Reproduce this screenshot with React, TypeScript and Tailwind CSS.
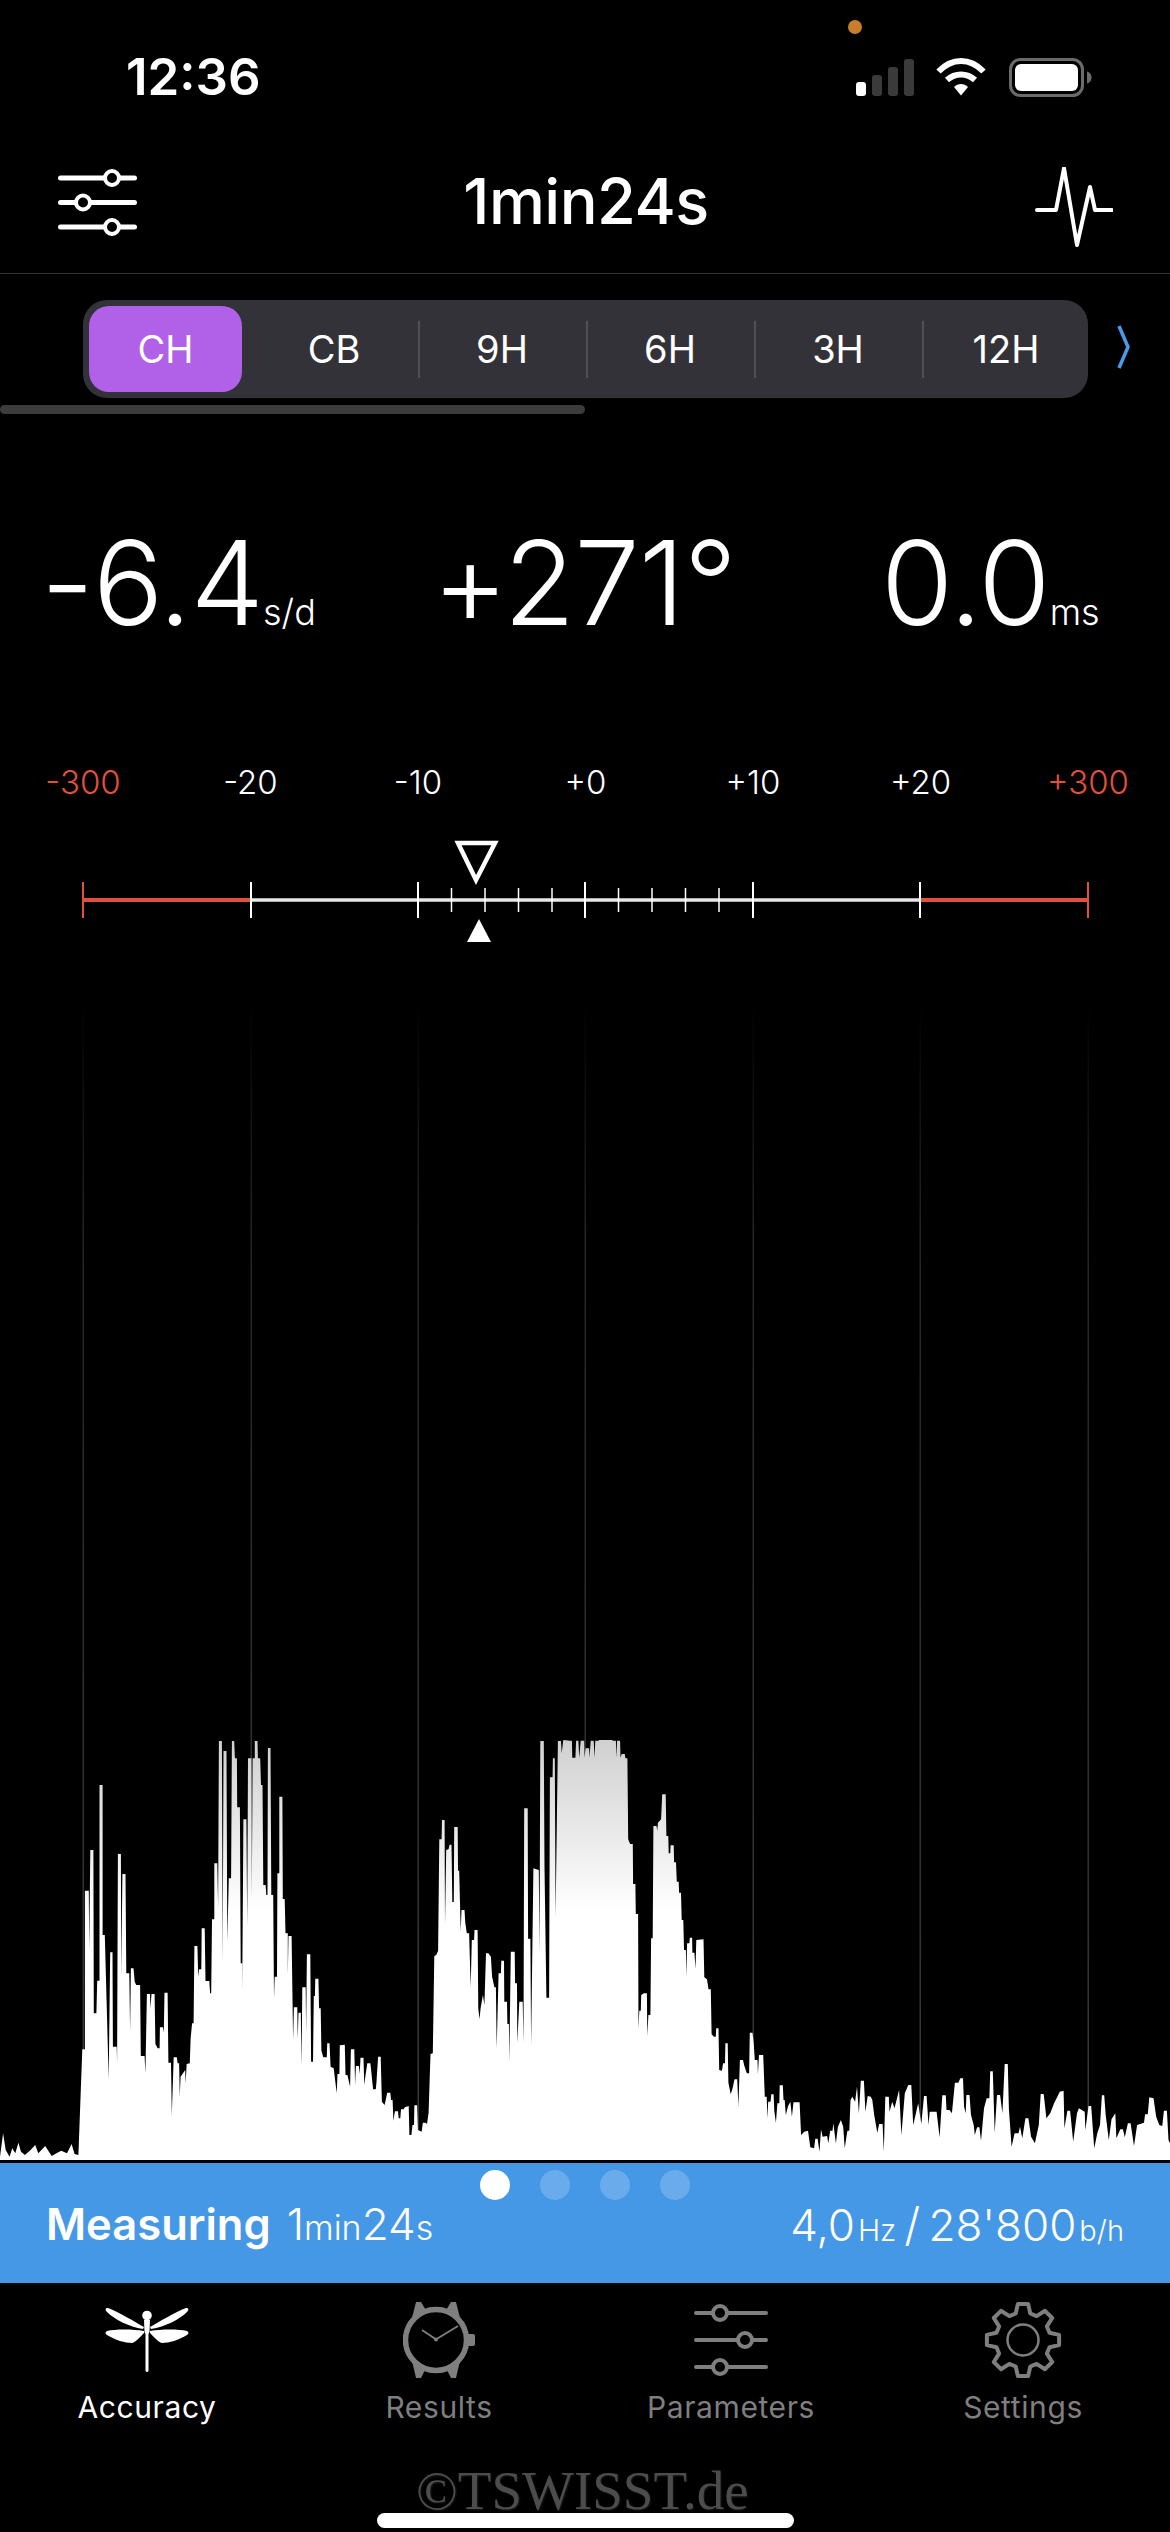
import React from "react";

const A: number[][] = [[0,1370],[8,1300],[15,1350],[25,1370],[32,1345],[40,1360],[48,1328],[55,1355],[65,1365],[80,1350],[92,1335],[100,1360],[118,1338],[135,1368],[150,1358],[160,1352],[175,1360],[187,1332],[195,1362],[205,1365],[215,1048],[222,1048],[222,572],[232,572],[233,750],[236,450],[244,450],[245,940],[252,940],[254,842],[260,842],[260,255],[268,255],[268,705],[274,705],[284,1138],[288,757],[294,757],[295,1040],[305,1040],[306,1088],[308,462],[316,462],[317,828],[320,522],[328,522],[330,820],[338,820],[340,995],[342,805],[349,805],[352,845],[356,855],[366,855],[368,1068],[378,1068],[380,1120],[384,882],[392,882],[393,925],[396,882],[404,882],[406,1032],[412,1045],[417,1045],[418,982],[426,982],[428,998],[430,878],[438,878],[440,1088],[447,1088],[449,1245],[454,1072],[462,1072],[464,1090],[468,1090],[470,1188],[472,1130],[484,1110],[485,1150],[488,1092],[496,1090],[498,1016],[502,970],[506,970],[508,738],[516,738],[518,830],[520,808],[526,808],[527,685],[535,685],[537,843],[547,843],[549,880],[552,880],[554,658],[560,658],[560,490],[568,490],[570,620],[572,123],[580,123],[582,785],[584,153],[592,153],[594,722],[598,535],[604,535],[606,123],[612,123],[614,175],[619,175],[620,322],[627,322],[629,790],[633,790],[633,880],[636,358],[644,358],[646,680],[648,175],[657,175],[658,595],[660,175],[666,175],[666,123],[673,123],[674,175],[680,175],[682,255],[686,255],[688,555],[694,555],[696,585],[699,585],[700,144],[707,144],[709,585],[714,585],[716,895],[718,830],[724,830],[725,520],[730,520],[730,290],[738,290],[739,597],[744,597],[746,700],[752,700],[752,825],[754,708],[762,708],[766,1020],[768,922],[777,922],[778,1018],[780,938],[786,938],[788,1100],[790,862],[799,862],[800,1000],[802,763],[811,763],[813,1085],[818,1085],[820,888],[823,888],[824,836],[832,836],[834,925],[838,925],[840,1052],[845,1072],[854,1072],[855,1030],[861,1030],[864,1100],[872,1105],[880,1180],[882,1122],[887,1122],[888,1036],[901,1034],[903,1125],[908,1125],[915,1160],[917,1048],[926,1048],[928,1155],[930,1098],[938,1098],[940,1122],[942,1073],[950,1073],[952,1155],[955,1128],[960,1090],[968,1090],[970,1112],[975,1168],[982,1168],[984,1145],[988,1070],[995,1070],[998,1205],[1005,1215],[1008,1200],[1012,1178],[1020,1178],[1022,1200],[1026,1200],[1028,1262],[1032,1234],[1040,1234],[1042,1255],[1046,1255],[1048,1228],[1055,1228],[1058,1222],[1068,1218],[1070,1305],[1075,1305],[1078,1275],[1082,1275],[1083,1216],[1090,1216],[1092,1290],[1102,1295],[1105,1268],[1112,1268],[1116,1272],[1120,1238],[1125,1062],[1131,1060],[1135,768],[1140,765],[1145,753],[1148,418],[1154,418],[1155,360],[1162,360],[1163,675],[1166,450],[1172,448],[1175,434],[1180,434],[1182,606],[1186,606],[1187,381],[1196,381],[1197,512],[1200,512],[1204,695],[1206,630],[1214,630],[1216,668],[1220,700],[1226,700],[1230,862],[1233,720],[1239,720],[1240,690],[1248,690],[1250,925],[1253,958],[1256,925],[1262,885],[1266,915],[1270,760],[1276,760],[1283,770],[1286,830],[1292,862],[1296,862],[1298,1045],[1303,820],[1309,820],[1310,782],[1317,782],[1318,905],[1325,905],[1326,972],[1330,972],[1331,1085],[1335,755],[1345,755],[1346,850],[1351,850],[1352,1028],[1357,905],[1366,905],[1368,1028],[1370,325],[1379,325],[1380,716],[1386,716],[1388,1035],[1394,505],[1408,510],[1410,755],[1412,123],[1421,123],[1423,500],[1428,893],[1435,893],[1437,232],[1444,232],[1445,175],[1450,175],[1452,650],[1458,123],[1466,123],[1468,160],[1472,120]];
const B: number[][] = [[0,122],[5,122],[6,173],[14,173],[16,122],[22,122],[24,173],[28,122],[37,122],[38,173],[41,145],[50,145],[51,173],[54,122],[62,122],[64,173],[66,122],[75,122],[76,120],[110,120],[112,122],[120,122],[121,173],[123,122],[131,122],[132,173],[135,162],[143,162],[145,175],[150,175],[152,418],[157,432],[164,432],[165,552],[171,552],[172,642],[178,642],[179,985],[181,932],[185,932],[186,885],[193,880],[201,880],[202,1008],[205,945],[210,945],[212,715],[216,715],[218,378],[226,378],[228,392],[230,368],[238,358],[241,283],[250,283],[252,408],[257,408],[258,460],[262,460],[263,436],[271,436],[272,487],[277,487],[279,545],[284,545],[285,578],[290,578],[292,660],[296,660],[298,750],[303,750],[304,832],[306,730],[312,730],[313,713],[319,713],[320,758],[325,758],[328,806],[330,720],[349,718],[351,832],[358,838],[362,868],[368,868],[370,1003],[376,1010],[381,1010],[382,985],[388,985],[390,1110],[397,1112],[400,1090],[405,1090],[406,1030],[412,1030],[414,1148],[420,1183],[425,1165],[430,1138],[437,1138],[440,1218],[444,1080],[452,1080],[455,1095],[462,1120],[468,1120],[470,998],[477,998],[480,1030],[483,1080],[490,1080],[491,1123],[494,1065],[505,1065],[509,1190],[514,1190],[516,1255],[518,1205],[524,1205],[526,1183],[532,1183],[534,1232],[538,1268],[542,1210],[547,1210],[548,1156],[556,1156],[558,1200],[561,1200],[564,1245],[570,1218],[576,1205],[580,1250],[584,1207],[600,1207],[604,1305],[612,1295],[622,1292],[628,1342],[638,1345],[641,1316],[647,1316],[652,1355],[656,1288],[660,1310],[672,1308],[675,1330],[680,1292],[686,1292],[688,1270],[695,1330],[700,1280],[708,1260],[714,1280],[718,1345],[725,1292],[730,1292],[733,1200],[738,1190],[745,1205],[750,1160],[755,1240],[760,1142],[768,1142],[772,1235],[778,1188],[786,1190],[790,1200],[795,1245],[803,1298],[808,1272],[817,1272],[820,1355],[824,1190],[833,1190],[835,1235],[842,1205],[848,1225],[860,1170],[866,1305],[875,1180],[884,1155],[892,1155],[897,1275],[910,1210],[918,1272],[925,1188],[932,1188],[937,1275],[940,1235],[958,1235],[966,1312],[973,1186],[982,1186],[984,1230],[992,1230],[998,1240],[1006,1148],[1015,1148],[1020,1135],[1027,1135],[1030,1220],[1034,1240],[1036,1185],[1044,1185],[1048,1245],[1055,1275],[1058,1305],[1064,1282],[1070,1282],[1074,1322],[1082,1225],[1089,1195],[1096,1195],[1098,1114],[1105,1114],[1110,1298],[1116,1185],[1124,1185],[1130,1240],[1136,1092],[1144,1092],[1147,1228],[1154,1340],[1162,1300],[1172,1300],[1176,1280],[1182,1315],[1190,1255],[1198,1255],[1205,1310],[1215,1330],[1225,1275],[1230,1182],[1238,1182],[1245,1255],[1255,1240],[1265,1210],[1280,1175],[1290,1172],[1292,1285],[1300,1232],[1307,1232],[1315,1325],[1325,1240],[1330,1225],[1345,1235],[1347,1290],[1355,1218],[1362,1218],[1370,1345],[1378,1300],[1385,1275],[1390,1186],[1396,1186],[1400,1245],[1408,1320],[1415,1258],[1425,1240],[1428,1315],[1438,1288],[1445,1288],[1450,1312],[1458,1270],[1465,1270],[1474,1338],[1482,1275],[1500,1268],[1503,1243],[1510,1243],[1514,1192],[1525,1195],[1532,1250],[1540,1275],[1548,1278],[1552,1232],[1560,1232],[1564,1320],[1568,1330]];

const K = 1568 / 600;
const CHART_TOP = 1000;
const histogram =
  [
    ...A.map(([x, y]) => [x / K, 1700 + y / 3 - CHART_TOP]),
    ...B.map(([x, y]) => [570 + x / K, 1700 + y / 3 - CHART_TOP]),
  ]
    .map(([x, y]) => `${x.toFixed(1)},${y.toFixed(1)}`)
    .join(" ") + " 1170,1160 0,1160";

const GRID = [83, 251, 418, 585, 753, 920, 1088];
const MINOR = [451.5, 485, 518.5, 552, 618.5, 652, 685.5, 719];

function gearPath(cx: number, cy: number, ro: number, ri: number) {
  const out: string[] = [];
  for (let i = 0; i < 8; i++) {
    const a = (i * Math.PI) / 4 - Math.PI / 2;
    const pts: [number, number][] = [
      [ri, a - 0.27],
      [ro, a - 0.14],
      [ro, a + 0.14],
      [ri, a + 0.27],
    ];
    pts.forEach(([r, t]) => out.push(`${(cx + r * Math.cos(t)).toFixed(1)} ${(cy + r * Math.sin(t)).toFixed(1)}`));
  }
  return "M" + out.join("L") + "Z";
}

function Sliders({ knobs, w, stroke, r, gap, color, ks }: { knobs: number[]; w: number; stroke: number; r: number; gap: number; color: string; ks: number }) {
  const h = gap * 2 + r * 2 + ks;
  const o = r + ks / 2;
  return (
    <svg width={w} height={h} viewBox={`0 0 ${w} ${h}`} className="block">
      {knobs.map((k, i) => (
        <g key={i}>
          <line x1={stroke / 2} x2={w - stroke / 2} y1={o + gap * i} y2={o + gap * i} stroke={color} strokeWidth={stroke} strokeLinecap="round" />
          <circle cx={k} cy={o + gap * i} r={r} fill="#000" stroke={color} strokeWidth={ks} />
        </g>
      ))}
    </svg>
  );
}

function StatusIcons() {
  return (
    <svg width="240" height="44" viewBox="853 56 240 44" className="block">
      <rect x="856" y="82" width="10" height="14" rx="3" fill="#fff" />
      <rect x="872" y="75" width="10" height="21" rx="3" fill="#3a3a3a" />
      <rect x="888" y="67" width="10" height="29" rx="3" fill="#3a3a3a" />
      <rect x="904" y="59" width="10" height="37" rx="3" fill="#3a3a3a" />
      <g fill="none" stroke="#fff">
        <path d="M938.5 71.5 C952 57.5 970 57.5 983.5 71.5" strokeWidth="6" />
        <path d="M947 80 C955 72.5 967 72.5 975 80" strokeWidth="6" />
        <path d="M954 87 L961 95.500 L968 87 C964 83 958 83 954 87Z" fill="#fff" stroke="none" />
        <rect x="1010.500" y="59.500" width="72" height="36" rx="10" stroke="#6b6b6b" strokeWidth="3" />
        <rect x="1015" y="64" width="63" height="27" rx="6" fill="#fff" stroke="none" />
        <path d="M1087 71.500 C1090.500 72.500 1091.500 75 1091.500 77.500 C1091.500 80 1090.500 82.500 1087 83.500Z" fill="#6b6b6b" stroke="none" />
      </g>
    </svg>
  );
}

function Scale() {
  return (
    <svg width="1170" height="110" viewBox="0 835 1170 110" className="block">
      <line x1="83" x2="251" y1="900" y2="900" stroke="#e0503c" strokeWidth="4" />
      <line x1="251" x2="920" y1="900" y2="900" stroke="#e8e8e8" strokeWidth="3.500" />
      <line x1="920" x2="1088" y1="900" y2="900" stroke="#e0503c" strokeWidth="4" />
      {GRID.map((x, i) => (
        <line key={x} x1={x} x2={x} y1="882" y2="918" strokeWidth="2" stroke={i === 0 || i === 6 ? "#e0503c" : "#fff"} />
      ))}
      {MINOR.map((x) => (
        <line key={x} x1={x} x2={x} y1="888" y2="912" strokeWidth="1.500" stroke="#fff" />
      ))}
      <path d="M458 843 L495 843 L476 880Z" fill="#000" stroke="#fff" strokeWidth="4.500" />
      <path d="M479 919 L491 942 L467 942Z" fill="#fff" />
    </svg>
  );
}

function Chart() {
  return (
    <svg width="1170" height="1160" viewBox="0 0 1170 1160" className="block">
      <defs>
        <linearGradient id="grid" x1="0" x2="0" y1="0" y2="1">
          <stop offset="0" stopColor="#333" stopOpacity="0" />
          <stop offset="0.2" stopColor="#333" stopOpacity="0.7" />
          <stop offset="1" stopColor="#3a3a3a" />
        </linearGradient>
        <linearGradient id="hist" gradientUnits="userSpaceOnUse" x1="0" x2="0" y1="740" y2="912">
          <stop offset="0" stopColor="#d0d0d0" />
          <stop offset="1" stopColor="#ffffff" />
        </linearGradient>
      </defs>
      {GRID.map((x) => (
        <rect key={x} x={x - 0.5} y="0" width="1.500" height="1160" fill="url(#grid)" />
      ))}
      <polygon points={histogram} fill="url(#hist)" />
    </svg>
  );
}

function Dragonfly() {
  const wings = (
    <>
      <path d="M39 20 C30 15 14 5 3 1 C0 1 0 3 2 5 C9 12 24 20 38 22Z" />
      <path d="M39 24 C28 22 10 22 2 24 C0 25 0 27 2 28 C10 33 20 36 27 36 C31 35 36 29 39 26Z" />
    </>
  );
  return (
    <svg width="84" height="66" viewBox="0 0 84 66" fill="#fff" className="block">
      {wings}
      <g transform="translate(84,0) scale(-1,1)">{wings}</g>
      <circle cx="42" cy="8.500" r="4.800" />
      <path d="M39 13 L45 13 L44.500 25 L43.500 27 L43.500 64 Q42 66 40.500 64 L40.500 27 L39.500 25Z" />
    </svg>
  );
}

function WatchIcon() {
  const c = "#7f7f7f";
  return (
    <svg width="72" height="76" viewBox="405 2302 72 76" className="block">
      <path d="M418 2302 L423 2302 L429 2312 L412 2326Z" fill={c} />
      <path d="M458 2302 L453 2302 L447 2312 L464 2326Z" fill={c} />
      <path d="M418 2378 L423 2378 L429 2366 L412 2352Z" fill={c} />
      <path d="M458 2378 L453 2378 L447 2366 L464 2352Z" fill={c} />
      <rect x="469" y="2334" width="8" height="12" rx="2" fill={c} />
      <circle cx="438" cy="2340" r="30.500" fill="#000" stroke={c} strokeWidth="5.500" />
      <path d="M437 2340 L460 2326 M439 2340 L424 2330" stroke={c} strokeWidth="1.800" fill="none" />
      <circle cx="438" cy="2339.500" r="2" fill={c} />
    </svg>
  );
}

function GearIcon() {
  const c = "#7f7f7f";
  return (
    <svg width="78" height="78" viewBox="0 0 78 78" className="block">
      <path d={gearPath(39, 39, 36.5, 27.5)} fill="none" stroke={c} strokeWidth="4" strokeLinejoin="round" />
      <circle cx="39" cy="39" r="15.500" fill="none" stroke={c} strokeWidth="2.500" />
    </svg>
  );
}

function Tab({ label, active, children }: { label: string; active?: boolean; children: React.ReactNode }) {
  return (
    <div className="flex flex-col items-center w-[292px]">
      <div className="h-[76px] flex items-center justify-center">{children}</div>
      <div className={`mt-[7px] text-[30px] leading-[44px] tracking-[0.6px] ${active ? "text-white" : "text-[#7f7f7f]"}`}>{label}</div>
    </div>
  );
}

const SEG = ["CH", "CB", "9H", "6H", "3H", "12H"];
const LABELS = ["-300", "-20", "-10", "+0", "+10", "+20", "+300"];

export default function App() {
  return (
    <div className="relative w-[1170px] h-[2532px] bg-black text-white overflow-hidden font-[Inter,sans-serif]">
      {/* status */}
      <div className="relative h-[140px] flex items-start justify-between pt-[52px] pl-[126px] pr-[77px]">
        <div className="text-[51px] leading-[50px] font-semibold">12:36</div>
        <div className="mt-[4px]"><StatusIcons /></div>
        <div className="absolute left-[848px] top-[20px] w-[14px] h-[14px] rounded-full bg-[#c77f2e]" />
      </div>

      {/* header */}
      <div className="h-[134px] flex items-center justify-between border-b border-[#333] pl-[58px] pr-[57px] relative">
        <div className="mb-[8px]"><Sliders knobs={[54, 25, 54]} w={79} stroke={5} r={7} gap={24.5} color="#fff" ks={4} /></div>
        <div className="text-[63px] font-medium leading-none tracking-[-0.5px] mb-[10px]">1min24s</div>
        <svg width="78" height="80" viewBox="1035 165 78 80" className="block">
          <path d="M1037 208 L1056 208 L1064 166 L1077 243 L1090 185 L1095 208 L1112 208" fill="none" stroke="#fff" strokeWidth="4" strokeLinecap="round" strokeLinejoin="round" />
        </svg>
      </div>

      {/* segments */}
      <div className="h-[124px] pt-[26px] pl-[83px] flex items-start">
        <div className="relative w-[1005px] h-[98px] rounded-[24px] bg-[#333238] flex p-[6px]">
          {SEG.map((s, i) => (
            <div key={s} className={`flex shrink-0 items-center justify-center text-[38px] ${i === 0 ? "w-[153px] mr-[8px] rounded-[20px] bg-[#b160e8]" : "w-[168px]"} ${i > 1 ? "relative" : ""}`}>
              {i > 1 && <span className="absolute left-0 top-[15px] bottom-[14px] w-[2px] bg-[#505056]" />}
              {s}
            </div>
          ))}
        </div>
        <svg width="14" height="46" viewBox="0 0 14 46" className="block ml-[29px] mt-[24px]">
          <path d="M2 2 L11 23 L2 44" fill="none" stroke="#4a9be8" strokeWidth="3.500" strokeLinejoin="round" />
        </svg>
      </div>
      <div className="w-[585px] h-[9px] rounded-full bg-[#3c3c3c] mt-[7px]" />

      {/* readings */}
      <div className="h-[346px] flex items-start pt-[105px] pl-[41px] font-light">
        <div className="flex items-baseline w-[391px]">
          <span className="text-[117px] leading-[128px] tracking-[-1px]">-6.4</span>
          <span className="text-[36px] leading-none">s/d</span>
        </div>
        <div className="w-[449px]">
          <span className="text-[117px] leading-[128px] tracking-[-1px]">+271°</span>
        </div>
        <div className="flex items-baseline">
          <span className="text-[117px] leading-[128px] tracking-[-1px]">0.0</span>
          <span className="text-[36px] leading-none">ms</span>
        </div>
      </div>

      {/* labels */}
      <div className="h-[75px] relative font-light text-[33px] leading-[40px] pt-[2px] flex pl-[83px]">
        {LABELS.map((l, i) => (
          <div key={l} className={`w-[167.5px] shrink-0 -translate-x-1/2 text-center ${i === 0 || i === 6 ? "text-[#e0503c]" : "text-white"}`}>{l}</div>
        ))}
      </div>

      <Scale />
      <div className="h-[55px]" />
      <Chart />
      <div className="h-[3px]" />

      {/* blue bar */}
      <div className="relative h-[120px] bg-[#4598e6] flex items-start justify-between pt-[35px] pl-[46px] pr-[46px]">
        <div className="flex items-baseline">
          <span className="text-[43.5px] font-semibold leading-[52px] mr-[16px]">Measuring</span>
          <span className="text-[44px] font-light leading-[52px]">1</span>
          <span className="text-[34px] font-light leading-[52px]">min</span>
          <span className="text-[44px] font-light leading-[52px]">24</span>
          <span className="text-[34px] font-light leading-[52px]">s</span>
        </div>
        <div className="flex items-baseline font-light">
          <span className="text-[44px] leading-[52px]">4,0</span>
          <span className="text-[30px] leading-[52px] ml-[3px]">Hz</span>
          <span className="text-[46px] leading-[52px] mx-[8px]">/</span>
          <span className="text-[44px] leading-[52px]">28'800</span>
          <span className="text-[29px] leading-[52px] ml-[3px]">b/h</span>
        </div>
        <div className="absolute left-[480px] top-[7px] flex gap-[30px]">
          <span className="w-[30px] h-[30px] rounded-full bg-white" />
          <span className="w-[30px] h-[30px] rounded-full bg-white/20" />
          <span className="w-[30px] h-[30px] rounded-full bg-white/20" />
          <span className="w-[30px] h-[30px] rounded-full bg-white/20" />
        </div>
      </div>

      {/* tabs */}
      <div className="flex pt-[19px] pl-[1px]">
        <Tab label="Accuracy" active><Dragonfly /></Tab>
        <Tab label="Results"><WatchIcon /></Tab>
        <Tab label="Parameters"><Sliders knobs={[26, 51, 26]} w={74} stroke={4} r={7} gap={27} color="#7f7f7f" ks={4} /></Tab>
        <Tab label="Settings"><GearIcon /></Tab>
      </div>

      {/* home bar & watermark */}
      <div className="flex justify-center mt-[84px]">
        <div className="w-[417px] h-[15px] rounded-full bg-white" />
      </div>
      <div className="absolute left-[416px] top-[2460px] font-['Liberation_Serif',serif] text-[55px] leading-[62px] text-[#555555] opacity-90 [text-shadow:1px_1px_2px_rgba(30,30,30,0.9)]">©TSWISST.de</div>
    </div>
  );
}
